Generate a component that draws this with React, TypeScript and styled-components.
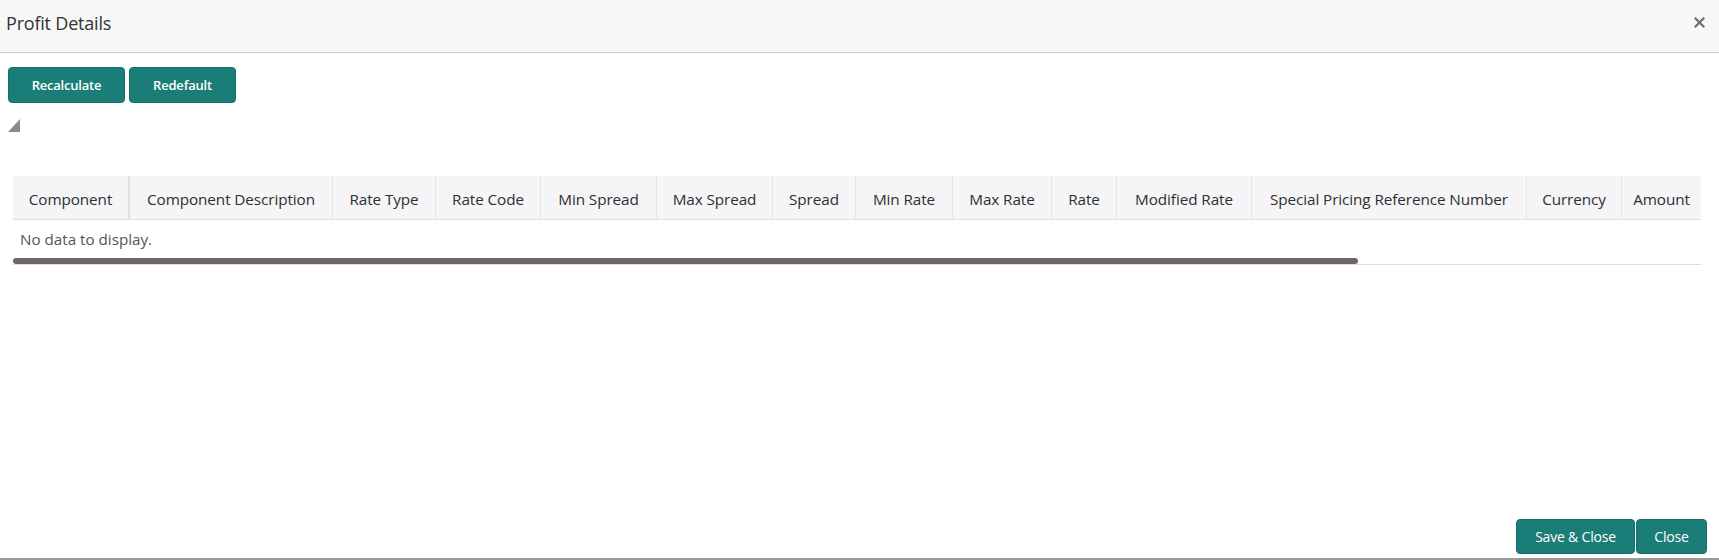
import React from "react";
import styled, { createGlobalStyle } from "styled-components";

const Global = createGlobalStyle`
  html, body { margin: 0; padding: 0; background: #fff; }
  body { font-family: "Open Sans", "Noto Sans", sans-serif; color: #333; }
  * { box-sizing: border-box; }
`;

const Dialog = styled.div`
  width: 1719px;
  height: 560px;
  display: flex;
  flex-direction: column;
  background: #fff;
  border-bottom: 2px solid #9a9a9a;
`;

const TitleBar = styled.div`
  height: 53px;
  flex: none;
  display: flex;
  align-items: center;
  justify-content: space-between;
  padding: 0 14px 0 6px;
  background: #f7f7f7;
  border-bottom: 1px solid #cfcfcf;
`;

const Title = styled.h1`
  margin: 0 0 7px;
  font-size: 18px;
  font-weight: 400;
  color: #333;
  letter-spacing: -0.2px;
`;

const CloseX = styled.button`
  border: none;
  background: transparent;
  padding: 0;
  width: 12px;
  height: 12px;
  display: flex;
  align-items: center;
  justify-content: center;
  cursor: pointer;
  margin-bottom: 8px;
`;

const Body = styled.div`
  flex: 1;
  display: flex;
  flex-direction: column;
  padding: 14px 0 0 8px;
`;

const ActionRow = styled.div`
  display: flex;
  gap: 4px;
`;

const TealButton = styled.button<{ $w: number; $h: number; $bold?: boolean }>`
  width: ${(p) => p.$w}px;
  height: ${(p) => p.$h}px;
  background: #1b7d77;
  color: #fff;
  border: 1px solid #16706a;
  border-radius: 4px;
  font-family: "Open Sans", "Noto Sans", sans-serif;
  font-size: ${(p) => (p.$bold ? 13 : 14)}px;
  font-weight: ${(p) => (p.$bold ? 600 : 400)};
  letter-spacing: -0.2px;
  cursor: pointer;
  padding: 0;
`;

const Toggle = styled.div`
  margin-top: 16px;
  width: 12px;
  height: 13px;
  background: #8a8a8a;
  clip-path: polygon(100% 0, 100% 100%, 0 100%);
`;

const TableWrap = styled.div`
  margin: 44px 0 0 5px;
  width: 1688px;
  display: flex;
  flex-direction: column;
`;

const HeaderRow = styled.div`
  display: flex;
  height: 44px;
  background: #f5f5f7;
  border-bottom: 1px solid #e1e1e3;
`;

const HeadCell = styled.div<{ $w: number; $strong?: boolean }>`
  width: ${(p) => p.$w}px;
  flex: none;
  display: flex;
  align-items: center;
  justify-content: center;
  padding-top: 2px;
  font-size: 15.3px;
  color: #2f2f2f;
  white-space: nowrap;
  letter-spacing: -0.1px;
  border-right: ${(p) => (p.$strong ? "2px solid #e0e0e2" : "1px solid #e6e6e8")};
  &:last-child { border-right: none; }
`;

const EmptyRow = styled.div`
  height: 38px;
  display: flex;
  align-items: center;
  padding-left: 7px;
  font-size: 15.2px;
  color: #555;
`;

const Track = styled.div`
  height: 7px;
  border-bottom: 1px solid #dcdcdc;
`;

const Thumb = styled.div`
  width: 1345px;
  height: 6px;
  background: #6f6767;
  border-radius: 3px;
`;

const Spacer = styled.div`
  flex: 1;
`;

const Footer = styled.div`
  display: flex;
  justify-content: flex-end;
  gap: 1px;
  padding: 0 12px 4px 0;
`;

const columns: [string, number][] = [
  ["Component", 117],
  ["Component Description", 203],
  ["Rate Type", 103],
  ["Rate Code", 105],
  ["Min Spread", 116],
  ["Max Spread", 116],
  ["Spread", 83],
  ["Min Rate", 97],
  ["Max Rate", 99],
  ["Rate", 65],
  ["Modified Rate", 135],
  ["Special Pricing Reference Number", 275],
  ["Currency", 95],
  ["Amount", 79],
];

export default function App() {
  return (
    <>
      <Global />
      <Dialog>
        <TitleBar>
          <Title>Profit Details</Title>
          <CloseX aria-label="close">
            <svg width="11" height="11" viewBox="0 0 11 11">
              <path d="M1.5 1.5 L9.5 9.5 M9.5 1.5 L1.5 9.5" stroke="#6f6f6f" strokeWidth="2.2" strokeLinecap="square" />
            </svg>
          </CloseX>
        </TitleBar>
        <Body>
          <ActionRow>
            <TealButton $w={117} $h={36} $bold>Recalculate</TealButton>
            <TealButton $w={107} $h={36} $bold>Redefault</TealButton>
          </ActionRow>
          <Toggle />
          <TableWrap>
            <HeaderRow>
              {columns.map(([name, w], i) => (
                <HeadCell key={name} $w={w} $strong={i === 0}>
                  {name}
                </HeadCell>
              ))}
            </HeaderRow>
            <EmptyRow>No data to display.</EmptyRow>
            <Track>
              <Thumb />
            </Track>
          </TableWrap>
          <Spacer />
          <Footer>
            <TealButton $w={119} $h={35}>Save &amp; Close</TealButton>
            <TealButton $w={71} $h={35}>Close</TealButton>
          </Footer>
        </Body>
      </Dialog>
    </>
  );
}
